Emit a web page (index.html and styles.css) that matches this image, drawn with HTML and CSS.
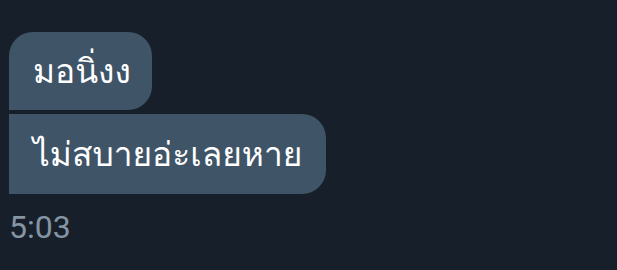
FILE: index.html
```html
<!DOCTYPE html>
<html lang="th">
<head>
<meta charset="utf-8">
<link rel="stylesheet" href="styles.css">
</head>
<body>
<div class="chat">
  <div class="bubble first">มอนิ่งง</div>
  <div class="bubble last">ไม่สบายอ่ะเลยหาย</div>
  <div class="time">5:03</div>
</div>
</body>
</html>
```

FILE: styles.css
```css
html, body {
  margin: 0;
  padding: 0;
  background: #17202a;
  width: 617px;
  height: 270px;
  overflow: hidden;
}
.chat {
  display: flex;
  flex-direction: column;
  align-items: flex-start;
  gap: 4px;
  padding: 32px 0 0 9px;
}
.bubble {
  background: #3f5567;
  color: #ffffff;
  font-family: "Loma", "Noto Sans Thai", "Noto Sans", sans-serif;
  font-size: 33.5px;
  height: 78px;
  box-sizing: border-box;
  display: flex;
  align-items: center;
  padding: 0 24px;
}
.first {
  padding-right: 21px;
  border-radius: 24px 24px 24px 0;
}
.last {
  height: 80px;
  border-radius: 0 24px 24px 0;
}
.time {
  margin-top: 10px;
  font-family: Roboto, sans-serif;
  font-size: 32px;
  color: #8695a3;
}
```
